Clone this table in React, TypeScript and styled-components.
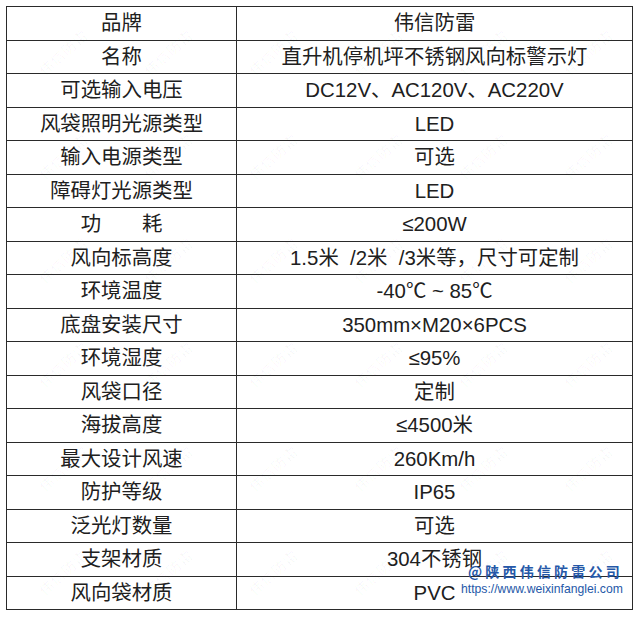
import React from 'react'
import styled, { createGlobalStyle } from 'styled-components'

const GlobalStyle = createGlobalStyle`
  html, body {
    margin: 0;
    padding: 0;
    background: #ffffff;
  }
  body {
    font-family: "Liberation Sans", "Noto Sans CJK SC", sans-serif;
    color: #1c1c1c;
  }
`

const Page = styled.div`
  position: relative;
  width: 640px;
  height: 618px;
  padding: 6px 0 0 6px;
  box-sizing: border-box;
  overflow: hidden;
`

const SpecTable = styled.div`
  display: grid;
  grid-template-columns: 230px 396px;
  grid-auto-rows: 33.5px;
  border-top: 1px solid #2a2a2a;
  border-left: 1px solid #2a2a2a;
  width: 627px;
  box-sizing: border-box;
`

const Cell = styled.div`
  display: flex;
  align-items: center;
  justify-content: center;
  border-right: 1px solid #2a2a2a;
  border-bottom: 1px solid #2a2a2a;
  font-size: 20.4px;
  line-height: 1;
  white-space: pre;
  color: #202020;
`

const WatermarkLayer = styled.div`
  position: absolute;
  inset: 0;
  pointer-events: none;
  display: grid;
  grid-template-columns: repeat(6, 1fr);
  grid-auto-rows: 104px;
  padding: 0 0 0 10px;
`

const Mark = styled.span`
  align-self: center;
  justify-self: center;
  transform: rotate(-42deg);
  font-size: 14px;
  font-family: "Noto Sans CJK SC", sans-serif;
  color: rgba(0, 0, 0, 0.035);
  letter-spacing: 1px;
`

const Stamp = styled.div`
  position: absolute;
  left: 461px;
  top: 562px;
  display: flex;
  flex-direction: column;
  align-items: flex-start;
  color: #2558a8;
  pointer-events: none;
`

const StampName = styled.div`
  font-family: "Noto Sans CJK SC", sans-serif;
  font-size: 14px;
  font-weight: 700;
  letter-spacing: 3.2px;
  line-height: 18px;
  padding-left: 7px;
`

const StampUrl = styled.div`
  font-family: "Liberation Sans", sans-serif;
  font-size: 12.2px;
  line-height: 15px;
  margin-top: 2px;
`

const rows: [string, string][] = [
  ['品牌', '伟信防雷'],
  ['名称', '直升机停机坪不锈钢风向标警示灯'],
  ['可选输入电压', 'DC12V、AC120V、AC220V'],
  ['风袋照明光源类型', 'LED'],
  ['输入电源类型', '可选'],
  ['障碍灯光源类型', 'LED'],
  ['功\u3000\u3000耗', '≤200W'],
  ['风向标高度', '1.5米  /2米  /3米等，尺寸可定制'],
  ['环境温度', '-40℃ ~ 85℃'],
  ['底盘安装尺寸', '350mm×M20×6PCS'],
  ['环境湿度', '≤95%'],
  ['风袋口径', '定制'],
  ['海拔高度', '≤4500米'],
  ['最大设计风速', '260Km/h'],
  ['防护等级', 'IP65'],
  ['泛光灯数量', '可选'],
  ['支架材质', '304不锈钢'],
  ['风向袋材质', 'PVC'],
]

const App: React.FC = () => {
  const marks = Array.from({ length: 36 })

  return (
    <>
      <GlobalStyle />
      <Page>
        <SpecTable>
          {rows.map(([label, value]) => (
            <React.Fragment key={label}>
              <Cell>{label}</Cell>
              <Cell>{value}</Cell>
            </React.Fragment>
          ))}
        </SpecTable>
        <WatermarkLayer>
          {marks.map((_, i) => (
            <Mark key={i}>伟信防雷</Mark>
          ))}
        </WatermarkLayer>
        <Stamp>
          <StampName>@陕西伟信防雷公司</StampName>
          <StampUrl>https://www.weixinfanglei.com</StampUrl>
        </Stamp>
      </Page>
    </>
  )
}

export default App
